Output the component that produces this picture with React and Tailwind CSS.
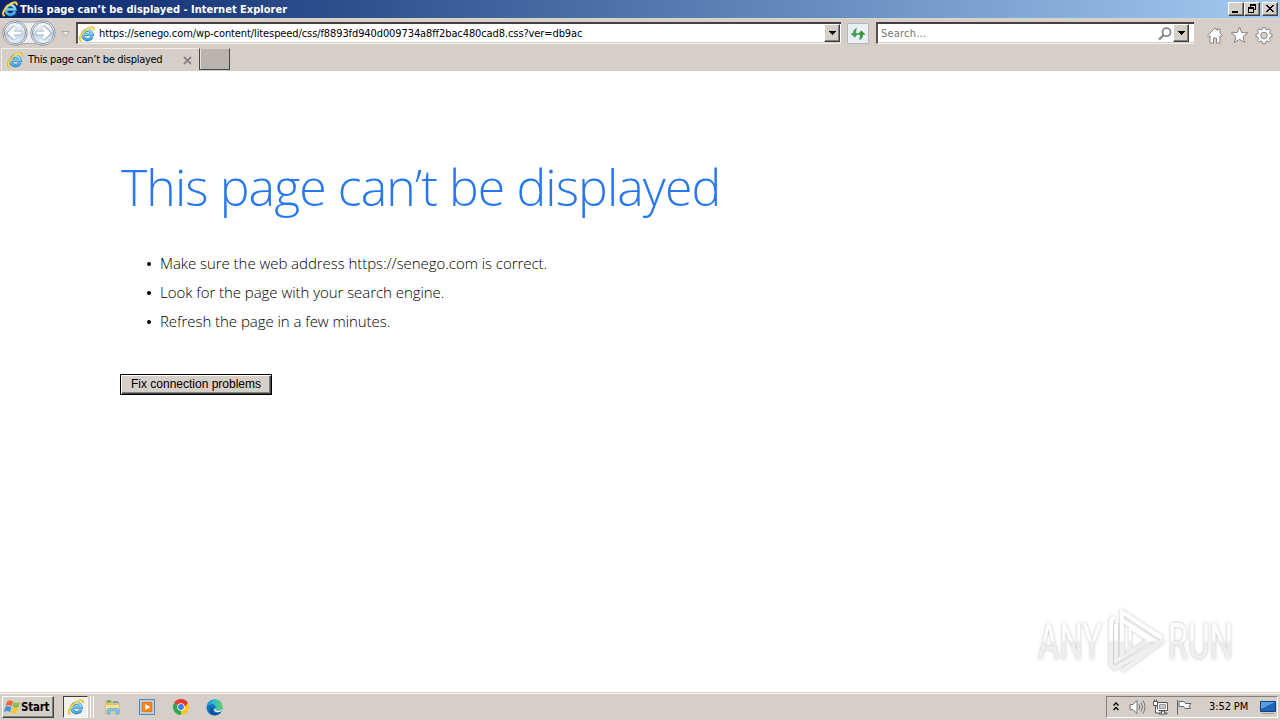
import React from 'react';

const ui = "font-['DejaVu_Sans_Condensed','DejaVu_Sans',sans-serif]";
const raised = 'bg-[#d4d0c8] border border-t-white border-l-white border-r-[#404040] border-b-[#404040] shadow-[inset_-1px_-1px_0_#808080]';

function IE({ size, id }) {
  return (
    <svg width={size} height={size} viewBox="0 0 16 16" className="shrink-0">
      <defs>
        <linearGradient id={id} x1="0" y1="0" x2="0" y2="1">
          <stop offset="0" stopColor="#a5e4fb" />
          <stop offset="1" stopColor="#4aa9e2" />
        </linearGradient>
      </defs>
      <path d="M13 10.400A4.800 4.800 0 1 1 13.200 8.300H4.600" fill="none" stroke="#2c80be" strokeWidth="3.300" />
      <path d="M12.800 10.400A4.800 4.800 0 1 1 13.100 8.300H4.600" fill="none" stroke={`url(#${id})`} strokeWidth="2.200" />
      <path d="M2.700 14.900C-1 14 1.500 8.200 6.300 4.200 10.800.5 15.700-.2 14.700 4.300" fill="none" stroke="#d5a71e" strokeWidth="1.900" />
      <path d="M2.700 14.600C-.5 13.700 1.800 8.200 6.400 4.400 10.800.8 15.300.3 14.500 4.200" fill="none" stroke="#ffdf4e" strokeWidth="1.300" />
    </svg>
  );
}

function NavButtons() {
  return (
    <svg width="56" height="28" viewBox="0 0 56 28" className="shrink-0">
      <defs>
        <linearGradient id="orb" x1="0" y1="0" x2="0" y2="1">
          <stop offset="0" stopColor="#f5f8fb" />
          <stop offset=".48" stopColor="#d3dfeb" />
          <stop offset=".52" stopColor="#bdcddd" />
          <stop offset="1" stopColor="#eaf8ff" />
        </linearGradient>
      </defs>
      <path d="M13 1.500Q28 5 41 1.500V26.500Q28 22 13 26.500Z" fill="#eeeff0" stroke="#a5a5a8" />
      {[13, 41].map((x) => (
        <g key={x}>
          <circle cx={x} cy="14" r="12.200" fill="#f6f9fb" stroke="#8d949b" />
          <circle cx={x} cy="14" r="10.600" fill="url(#orb)" stroke="#74818e" strokeWidth=".8" />
        </g>
      ))}
      <g fill="none" stroke="#9baab9" strokeWidth="4.400">
        <path d="M20 14H7.500M13 8 7 14l6 6" />
        <path d="M34 14h12.500M41 8l6 6-6 6" />
      </g>
      <g fill="none" stroke="#fff" strokeWidth="3.200">
        <path d="M19.500 14H8M13 8.500 7.500 14l5.500 5.500" />
        <path d="M34.500 14H46M41 8.500l5.500 5.500-5.500 5.500" />
      </g>
    </svg>
  );
}

function DropButton() {
  return (
    <div className={`${raised} w-4 h-[18px] shrink-0 flex items-center justify-center`}>
      <svg width="8" height="4" viewBox="0 0 8 4" shapeRendering="crispEdges"><path d="M0 0h8L4 4Z" fill="#000" /></svg>
    </div>
  );
}

function WinButton({ children }) {
  return (
    <div className={`${raised} w-4 h-[14px]`}>
      <svg width="14" height="12" viewBox="0 0 14 12" shapeRendering="crispEdges" className="block">{children}</svg>
    </div>
  );
}

function TitleBar() {
  return (
    <div className="h-[18px] flex items-center pl-[2px] pr-[2px] bg-linear-to-r from-[#0a246a] to-[#a6caf0]">
      <IE size={16} id="ieTitle" />
      <div className={`${ui} ml-[2px] mt-px text-[11px] font-bold text-white whitespace-pre leading-[18px] tracking-[0.01px]`}>This page can’t be displayed - Internet Explorer</div>
      <div className="ml-auto flex">
        <WinButton><path d="M3 8h6v2H3Z" fill="#000" /></WinButton>
        <WinButton>
          <path d="M5 1h6v6H9V6h1V3H6v1H5Z" fill="#000" />
          <path fillRule="evenodd" d="M3 4h6v6H3ZM4 6h4v3H4Z" fill="#000" />
        </WinButton>
        <div className="w-[2px]" />
        <WinButton><path d="M3 2h2v1h1v1h2V3h1V2h2v1h-1v1H9v1H8v1h1v1h1v1h1v1H9V8H8V7H6v1H5v1H3V8h1V7h1V6h1V5H5V4H4V3H3Z" fill="#000" /></WinButton>
      </div>
    </div>
  );
}

function CommandIcons() {
  return (
    <svg width="68" height="20" viewBox="0 0 68 20" className="ml-[12px] mt-[6px] shrink-0" fill="#fff" stroke="#858585" strokeWidth="1" strokeLinejoin="round">
      <path d="M1.500 10.500 9 3l2.500 2.500V4H14v4l2.500 2.500-1.200 1.200-1.300-1V18h-3.500v-5h-3v5H4v-7.300l-1.300 1Z" />
      <path d="m33.500 2 2.200 5.500 6 .4-4.600 3.800 1.500 5.800-5.100-3.200-5.100 3.200 1.500-5.800-4.600-3.800 6-.4Z" />
      <path fillRule="evenodd" d="m56.800 2.500 2.400 0 .5 2 1.300.5 1.900-1 1.600 1.600-1 1.900.5 1.300 2 .5v2.400l-2 .5-.5 1.300 1 1.900-1.600 1.600-1.900-1-1.300.5-.5 2h-2.400l-.5-2-1.300-.5-1.900 1-1.600-1.600 1-1.900-.5-1.300-2-.5V9.300l2-.5.5-1.300-1-1.900L53.100 4l1.900 1 1.300-.5ZM58 7.200a3.300 3.300 0 1 0 0 6.600 3.300 3.300 0 0 0 0-6.600Z" />
    </svg>
  );
}

const field = 'h-[22px] bg-white border-t-2 border-l-2 border-t-[#453f40] border-l-[#57504e] border-b border-b-[#f5f2ee] shadow-[inset_0_-1px_0_#d4d0c8] flex items-center';

function AddressRow() {
  return (
    <div className="h-[30px] flex items-start pl-[2px] border-t border-t-[#d9d7cb]">
      <NavButtons />
      <svg width="9" height="6" viewBox="0 0 9 6" className="ml-[3px] mt-[12px] shrink-0"><path d="M.5.500h8L4.500 5Z" fill="#e9e6e2" stroke="#b2aaa5" /></svg>
      <div className={`${field} mt-[3px] ml-[6px] w-[765px]`}>
        <div className="w-px" />
        <IE size={16} id="ieAddress" />
        <div className={`${ui} ml-[4px] mt-[2px] text-[11px] whitespace-pre tracking-[-0.1px]`}>https://senego.com/wp-content/litespeed/css/f8893fd940d009734a8ff2bac480cad8.css?ver=db9ac</div>
        <div className="ml-auto mr-px flex -mt-px"><DropButton /></div>
      </div>
      <div className="ml-[6px] mt-[4px] w-[22px] h-[21px] shrink-0 bg-[#eaf0f6] border border-[#b6b7bb] rounded-[1px] flex items-center justify-center">
        <svg width="14" height="14" viewBox="0 0 15 15">
          <path d="M0 7h2.500c0-3 1-4.500 3.500-5.500L5 4.500V7h2.500L4 11Z" fill="#3da447" stroke="#1d8228" strokeWidth=".5" />
          <path d="M15 8h-2.500c0 3-1 4.500-3.500 5.500l1-3V8H7.500L11 4Z" fill="#2b9c34" stroke="#147720" strokeWidth=".5" />
        </svg>
      </div>
      <div className={`${field} mt-[3px] ml-[7px] w-[318px]`}>
        <div className={`${ui} ml-[3px] mt-[2px] text-[11px] text-[#777] tracking-[0.2px]`}>Search...</div>
        <svg width="14" height="14" viewBox="0 0 14 14" className="ml-auto mr-px" fill="none" stroke="#858585" strokeWidth="1.800"><circle cx="8.500" cy="5.200" r="4" /><path d="M5.600 8 1 12.600" strokeWidth="2.200" /></svg>
        <div className="flex -mt-px"><DropButton /></div>
        <div className="w-[5px]" />
      </div>
      <CommandIcons />
    </div>
  );
}

function TabRow() {
  return (
    <div className="h-[23px] flex items-start pl-[1px]">
      <div className="w-[198px] h-[23px] border-t border-l border-[#f0ece8] flex items-center pl-[5px] pr-[6px]">
        <IE size={16} id="ieTab" />
        <div className={`${ui} ml-[5px] mt-px text-[11px] whitespace-pre tracking-[-0.28px]`}>This page can’t be displayed</div>
        <svg width="9" height="9" viewBox="0 0 9 9" className="ml-auto mr-px" stroke="#8b8683" strokeWidth="1.900"><path d="m1 1 7 7M8 1 1 8" /></svg>
      </div>
      <div className="w-[31px] h-[22px] bg-[#bab4b0] border border-[#494443] border-t-[#d8d2ce] shadow-[inset_1px_0_0_#e6e1dd]" />
    </div>
  );
}

function Watermark() {
  return (
    <svg width="216" height="72" viewBox="0 0 216 72" className="absolute left-[1032px] top-[604px]">
      <defs>
        <linearGradient id="wm" x1="0" y1="0" x2="0" y2="72" gradientUnits="userSpaceOnUse">
          <stop offset="0" stopColor="#fff" /><stop offset=".5" stopColor="#fdfdfd" />
          <stop offset=".53" stopColor="#ededed" /><stop offset="1" stopColor="#f2f2f2" />
        </linearGradient>
        <filter id="wmShadow" x="-10%" y="-20%" width="120%" height="140%"><feDropShadow dx="0" dy="0" stdDeviation="1.700" floodColor="#777" floodOpacity=".5" /></filter>
      </defs>
      <g filter="url(#wmShadow)" fill="url(#wm)">
        <text x="6" y="55" textLength="64" lengthAdjust="spacingAndGlyphs" className="font-['Roboto',sans-serif] text-[50px]">ANY</text>
        <text x="136" y="55" textLength="65" lengthAdjust="spacingAndGlyphs" className="font-['Roboto',sans-serif] text-[50px]">RUN</text>
        <g fill="none" stroke="url(#wm)" strokeWidth="4">
          <path d="M90 55V8l40 26" />
          <path d="M90 16l37 24" />
          <path d="M98 46V24l21 14" strokeWidth="2.500" />
          <path d="M83 13l-4 3v45l4 3L129 38M84 20v37l32-20M90 67l41-30" />
        </g>
      </g>
    </svg>
  );
}

function ErrorPage() {
  return (
    <div className="flex-1 bg-white pl-[120px] overflow-hidden">
      <h1 className="mt-[81px] ml-px h-[70px] leading-[70px] text-[50px] font-light text-[#2778ec] whitespace-pre font-['Open_Sans',sans-serif] tracking-[-0.92px]">This page can’t be displayed</h1>
      <ul className="mt-[27px] text-[15px] leading-[29px] font-light text-black font-['Open_Sans',sans-serif] tracking-[-0.05px]">
        {['Make sure the web address https://senego.com is correct.', 'Look for the page with your search engine.', 'Refresh the page in a few minutes.'].map((t) => (
          <li key={t} className="flex items-center pl-[27px] whitespace-pre"><span className="w-1 h-1 rounded-full bg-black mr-[9px]" />{t}</li>
        ))}
      </ul>
      <button className="block mt-[38px] w-[152px] h-[21px] border border-black bg-[#d5cec9] shadow-[inset_1px_1px_0_#fff,inset_-1px_-1px_0_#404040,inset_-2px_-2px_0_#808080] text-[12px] leading-[17px] text-black font-['Liberation_Sans',sans-serif] whitespace-nowrap">Fix connection problems</button>
    </div>
  );
}

function Taskbar() {
  return (
    <div className="h-[28px] border-t border-[#d4d0c8] flex items-start">
      <div className="flex-1 h-[27px] border-t border-white flex items-center pl-[2px] pr-[2px]">
        <div className={`${raised} w-[52px] h-[22px] flex items-center pl-[1px]`}>
          <svg width="17" height="16" viewBox="0 0 17 16" className="shrink-0">
            <path d="M3 2.500Q6 .5 9 2.500L7.700 7.300Q5 5.300 1.700 7Z" fill="#ed6639" />
            <path d="M9.800 3Q12.500 4.800 16 3L14.600 8Q11.500 9.700 8.500 7.800Z" fill="#86bf41" />
            <path d="M1.400 8Q4.500 6.300 7.400 8.300L6 13.200Q3.300 11 0 12.800Z" fill="#4193de" />
            <path d="M8.200 8.800Q11 10.700 14.300 9L12.900 13.800Q9.700 15.500 6.900 13.700Z" fill="#f9c62e" />
          </svg>
          <span className={`${ui} mt-px text-[11.500px] font-bold tracking-[-0.25px]`}>Start</span>
        </div>
        <div className="ml-[9px] w-[25px] h-[22px] bg-[#f3f1ed] border border-t-[#404040] border-l-[#404040] border-r-white border-b-white flex items-center justify-center"><IE size={16} id="ieTask" /></div>
        <div className="ml-[2px] w-px h-[22px] bg-white" /><div className="ml-[2px] w-px h-[22px] bg-white" />
        <svg width="18" height="18" viewBox="0 0 18 18" className="ml-[10px]">
          <path d="M2 3h5l1 1.500h7V13H2Z" fill="#e9c45e" stroke="#caa044" strokeWidth=".6" />
          <path d="M3 2.500h4v2H3Z" fill="#55a968" /><path d="M9 3h5v2H9Z" fill="#6ba8d8" />
          <path d="M1.500 6.500h14V15h-14Z" fill="#f8e39a" stroke="#d8b961" strokeWidth=".6" />
          <path d="M3 16v-4q0-1.500 2-1.500h8q2 0 2 1.500v4h-3v-3H6v3Z" fill="#83c7eb" stroke="#4d9cc9" strokeWidth=".6" />
        </svg>
        <svg width="16" height="16" viewBox="0 0 16 16" className="ml-[17px]">
          <path d="M.5.500h15v15H.500Z" fill="#acd3ed" stroke="#4f88b6" /><path d="M2.500 2h11v12h-11Z" fill="#e2eff7" /><path d="M3 3h10v10H3Z" fill="#f58518" stroke="#e16a12" strokeWidth=".7" /><path d="M6.300 4.900v6.200L11.300 8Z" fill="#fff" />
        </svg>
        <svg width="16" height="16" viewBox="0 0 16 16" className="ml-[18px]">
          <path d="M8 8 1.070 4A8 8 0 0 1 14.930 4Z" fill="#e33b2e" /><path d="M8 8 8 16A8 8 0 0 1 1.070 4Z" fill="#2da94f" /><path d="M8 8 14.930 4A8 8 0 0 1 8 16Z" fill="#fdc91b" /><path d="M8 4h6.900L11 9Z" fill="#e33b2e" /><path d="m4.500 10 3.500 2-2.200 3.700Z" fill="#2da94f" /><circle cx="8" cy="8" r="3.800" fill="#fff" /><circle cx="8" cy="8" r="2.900" fill="#3b7ded" />
        </svg>
        <svg width="17" height="17" viewBox="0 0 17 17" className="ml-[17px]">
          <defs><linearGradient id="edgeTop"><stop offset="0" stopColor="#1499d8" /><stop offset=".5" stopColor="#30bfc5" /><stop offset="1" stopColor="#68d25b" /></linearGradient></defs>
          <circle cx="8.500" cy="8.500" r="8" fill="#1371bd" />
          <path d="M.5 8.500C1 3.500 4.500.5 8.500.5c5 0 8 3.500 8 7 0 3-2.500 4-4.500 4-2.500 0-3-1-2.200-2C10.500 6.500 7 4.500 4 5.500 1.800 6.200.8 7.500.5 8.500Z" fill="url(#edgeTop)" />
          <path d="M6.500 8.500c-1.700 5 4 7 8.300 4.600C11.500 18 3.500 17 3.800 11.300c.1-1.600 1.200-2.500 2.700-2.800Z" fill="#124d93" />
          <path d="M9.700 9.400c-.8 1.300 0 2.100 2.300 2.100 1.500 0 3-.3 3.900-1.500l.2 1.300c-2 2.900-7.600 2.300-8-.4-.1-1 .8-2 1.600-1.500Z" fill="#ebf2f5" />
        </svg>
        <div className="ml-auto w-[172px] h-[22px] border border-t-[#808080] border-l-[#808080] border-r-white border-b-white flex items-center pl-[6px] pr-[1px]">
          <svg width="6" height="9" viewBox="0 0 6 9" className="mr-[10px] -mt-[2px]" fill="none" stroke="#000" strokeWidth="1.300"><path d="m.5 3.500 2.500-2.500 2.500 2.500M.5 8 3 5.500 5.500 8" /></svg>
          <svg width="17" height="16" viewBox="0 0 17 16" fill="none" stroke="#777"><path d="M1 5.500h3L8 1.500v13l-4-4H1Z" fill="#fff" /><path d="M10 5.500q1.600 2.500 0 5M12 3.500q3 4.500 0 9M14 1.500q4 6.500 0 13" /></svg>
          <svg width="17" height="16" viewBox="0 0 17 16" className="ml-[6px]" fill="#fff" stroke="#555"><path d="M5.500 3.500h10v8h-10Z" /><path d="M7.500 5.500h6v4h-6Z" fill="#c9c9c9" stroke="#999" /><path d="M9.500 12v2H7v1h8v-1h-2.500v-2Z" /><path d="M1.500 2.500h4v4h-4ZM2.500.5v2M4.500.5v2M3.500 7v7H8" /></svg>
          <svg width="16" height="16" viewBox="0 0 16 16" className="ml-[7px]" fill="#fff" stroke="#666"><path d="M1.500 1v14.500M3 2.500h5l1.500 2H15L13 7l1.500 2.500H9l-1.500-2H3Z" /></svg>
          <span className={`${ui} ml-[17px] mt-px text-[11px] whitespace-pre tracking-[-0.1px]`}>3:52 PM</span>
          <svg width="16" height="14" viewBox="0 0 16 14" className="ml-auto mt-[2px]"><path d="M.5.500h15v10H.500Z" fill="#1e66ba" stroke="#173f7c" /><path d="M1 1h14L1 8Z" fill="#5aa0e0" /><path d="M2 12h12v1H2Z" fill="#9e9b97" /></svg>
        </div>
      </div>
    </div>
  );
}

export default function App() {
  return (
    <div className="relative w-[1280px] h-[720px] bg-[#d5cec9] flex flex-col overflow-hidden text-black">
      <TitleBar />
      <AddressRow />
      <TabRow />
      <ErrorPage />
      <Taskbar />
      <Watermark />
    </div>
  );
}
